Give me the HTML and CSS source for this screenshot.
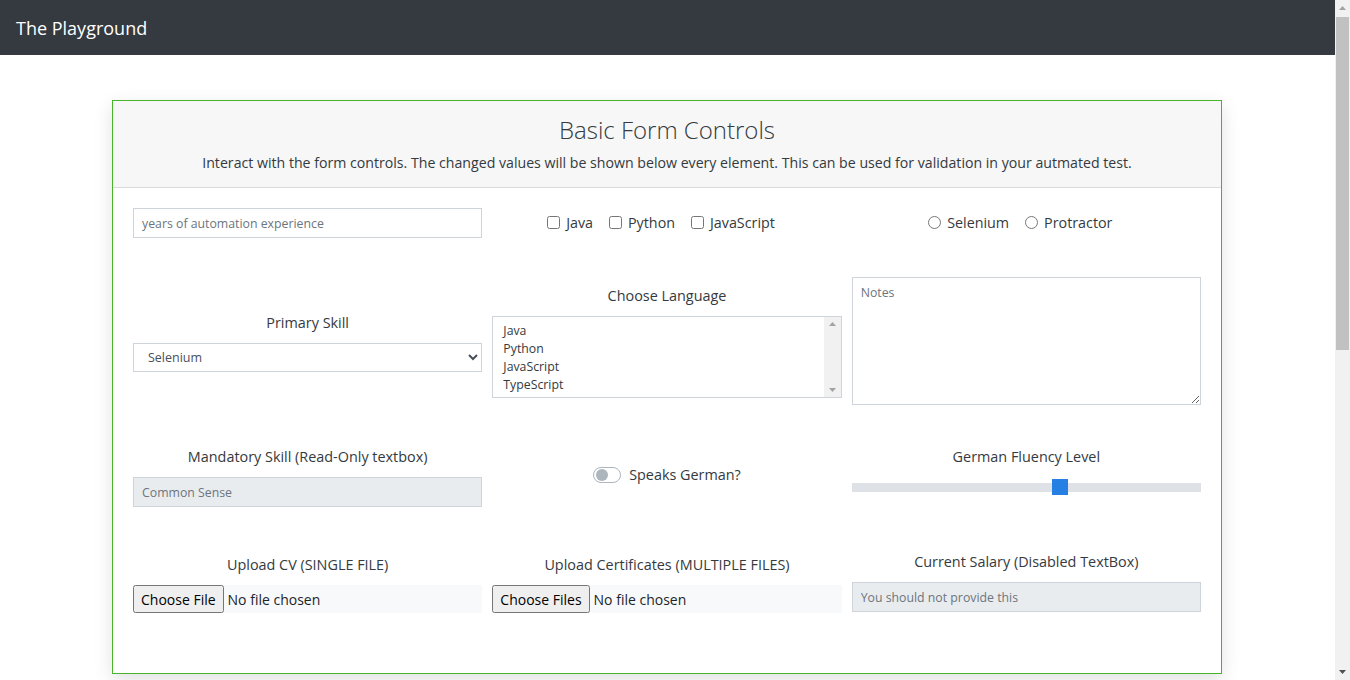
FILE: index.html
```html
<!DOCTYPE html>
<html lang="en">
<head>
<meta charset="utf-8">
<title>The Playground</title>
<link rel="stylesheet" href="styles.css">
</head>
<body>
<nav class="navbar"><span class="brand">The Playground</span></nav>
<main class="container">
  <section class="card">
    <header class="card-header">
      <h1 class="card-title">Basic Form Controls</h1>
      <p class="card-sub">Interact with the form controls. The changed values will be shown below every element. This can be used for validation in your autmated test.</p>
    </header>
    <div class="card-body">
      <div class="row row-1">
        <div class="cell"><input class="control" type="text" placeholder="years of automation experience"></div>
        <div class="cell center">
          <label class="check"><input type="checkbox"> Java</label>
          <label class="check"><input type="checkbox"> Python</label>
          <label class="check"><input type="checkbox"> JavaScript</label>
        </div>
        <div class="cell center">
          <label class="check"><input type="radio" name="tool"> Selenium</label>
          <label class="check"><input type="radio" name="tool"> Protractor</label>
        </div>
      </div>
      <div class="row row-2">
        <div class="cell">
          <div class="label">Primary Skill</div>
          <select class="control select"><option>Selenium</option><option>Protractor</option></select>
        </div>
        <div class="cell">
          <div class="label">Choose Language</div>
          <div class="listwrap">
            <select class="control listbox" multiple size="4"><option>Java</option><option>Python</option><option>JavaScript</option><option>TypeScript</option></select>
            <div class="fake-scroll small">
              <svg class="arrow-up" width="17" height="14" viewBox="0 0 17 14"><path d="M5 9 L8.5 5 L12 9 Z" fill="#a3a3a3"/></svg>
              <svg class="arrow-down" width="17" height="14" viewBox="0 0 17 14"><path d="M5 5 L8.5 9 L12 5 Z" fill="#a3a3a3"/></svg>
            </div>
          </div>
        </div>
        <div class="cell"><textarea class="control notes" placeholder="Notes"></textarea></div>
      </div>
      <div class="row row-3">
        <div class="cell">
          <div class="label">Mandatory Skill (Read-Only textbox)</div>
          <input class="control grey" type="text" readonly placeholder="Common Sense">
        </div>
        <div class="cell center switch-cell">
          <span class="switch"><span class="knob"></span></span><span class="switch-text">Speaks German?</span>
        </div>
        <div class="cell">
          <div class="label">German Fluency Level</div>
          <input class="range" type="range" min="0" max="10" value="6">
        </div>
      </div>
      <div class="row row-4">
        <div class="cell">
          <div class="label">Upload CV (SINGLE FILE)</div>
          <input class="file" type="file">
        </div>
        <div class="cell">
          <div class="label">Upload Certificates (MULTIPLE FILES)</div>
          <input class="file" type="file" multiple>
        </div>
        <div class="cell salary">
          <div class="label">Current Salary (Disabled TextBox)</div>
          <input class="control grey" type="text" disabled placeholder="You should not provide this">
        </div>
      </div>
    </div>
  </section>
</main>
<div class="page-scroll">
  <svg class="ps-up" width="15" height="17" viewBox="0 0 15 17"><path d="M4 10 L7.5 6 L11 10 Z" fill="#a3a3a3"/></svg>
  <div class="ps-thumb"></div>
  <svg class="ps-down" width="15" height="17" viewBox="0 0 15 17"><path d="M4 7 L7.5 11 L11 7 Z" fill="#505050"/></svg>
</div>
</body>
</html>
```
FILE: styles.css
```css
body {
  margin: 0;
  padding-right: 16px;
  font-family: "Open Sans", "Noto Sans", sans-serif;
  font-size: 14px;
  color: #212529;
  background: #fff;
}
.navbar {
  height: 55px;
  background: #343a40;
  display: flex;
  align-items: center;
  padding: 0 16px;
  margin-right: -16px;
}
.brand { color: #fff; font-size: 18px; }
.container {
  width: 1110px;
  margin: 45px auto 650px;
}
.card {
  border: 1px solid #46b52a;
  box-shadow: 0 6px 18px rgba(0,0,0,.12);
  background: #fff;
}
.card-header {
  background: #f7f7f7;
  border-bottom: 1px solid #dcdcdc;
  height: 87px;
  text-align: center;
  box-sizing: border-box;
  padding-top: 13px;
}
.card-title {
  margin: 0;
  font-size: 24px;
  font-weight: 300;
  line-height: 32px;
  color: #343a40;
}
.card-sub { margin: 7px 0 0; font-size: 14.15px; line-height: 20px; color: #343a40; }
.card-body { padding: 20px 20px 60px; }
.row {
  display: grid;
  grid-template-columns: repeat(3, 1fr);
  column-gap: 10px;
}
.row-1 { align-items: center; height: 30px; }
.row-2 { align-items: center; margin-top: 39px; }
.row-3 { align-items: start; margin-top: 40px; }
.row-4 { align-items: start; margin-top: 46px; }
.cell { display: flex; flex-direction: column; min-width: 0; }
.cell.center { flex-direction: row; justify-content: center; align-items: center; gap: 4px; }
.row-1 .cell.center { margin-top: -2px; }
.label { text-align: center; font-size: 14.4px; line-height: 24px; margin-bottom: 8px; color: #343a40; }
.check { display: flex; align-items: center; font-size: 14.3px; color: #343a40; margin-right: 12px; }
.check input { margin: 0 6px 0 0; width: 13px; height: 13px; }
.control {
  box-sizing: border-box;
  width: 100%;
  border: 1px solid #ced4da;
  border-radius: 0;
  font-family: inherit;
  font-size: 12.3px;
  color: #495057;
  background: #fff;
  height: 30px;
  padding: 0 8px;
  outline: none;
}
.control::placeholder { color: #6c757d; }
.select { height: 29px; padding: 0 8px 0 10px; font-size: 12.5px; }
.listwrap { position: relative; }
.listbox { height: 82px; padding: 5px 8px 4px; display: block; }
.listbox option { font-size: 12.3px; padding: 0 2px 1px; color: #343a40; }
.fake-scroll {
  position: absolute;
  right: 1px;
  top: 1px;
  bottom: 1px;
  width: 17px;
  background: #f1f1f1;
  display: flex;
  flex-direction: column;
  justify-content: space-between;
}
.fake-scroll svg { display: block; }
.notes { height: 128px; padding: 6px 8px; resize: vertical; }
.grey { background: #e9ecef; }
.cell.switch-cell { margin-top: 20px; gap: 8px; }
.switch {
  position: relative;
  width: 28px;
  height: 16px;
  box-sizing: border-box;
  border: 1px solid #adb5bd;
  border-radius: 8px;
  background: #fff;
}
.knob {
  position: absolute;
  left: 2px;
  top: 1px;
  width: 12px;
  height: 12px;
  border-radius: 50%;
  background: #adb5bd;
}
.switch-text { font-size: 14.4px; color: #343a40; }
.range {
  -webkit-appearance: none;
  appearance: none;
  width: 100%;
  margin: 2px 0 0;
  height: 16px;
  background: transparent;
}
.range::-webkit-slider-runnable-track { height: 9px; background: #dee2e6; }
.range::-webkit-slider-thumb {
  -webkit-appearance: none;
  width: 16px;
  height: 16px;
  margin-top: -4px;
  background: #2680e3;
  border: 0;
}
.file {
  box-sizing: border-box;
  width: 100%;
  height: 28px;
  background: #f8f9fa;
  font-family: inherit;
  font-size: 14px;
  color: #212529;
}
.file::file-selector-button {
  font-family: inherit;
  font-size: 14px;
  height: 28px;
  margin-right: 4px;
}
.salary { margin-top: -3px; }
.page-scroll {
  position: fixed;
  top: 0;
  right: 0;
  bottom: 0;
  width: 15px;
  background: #f1f1f1;
  display: flex;
  flex-direction: column;
  align-items: center;
}
.page-scroll svg { display: block; flex: none; }
.ps-thumb {
  width: 13px;
  height: 333px;
  background: #c1c1c1;
  margin-top: 0;
}
.ps-down { margin-top: auto; }
```
